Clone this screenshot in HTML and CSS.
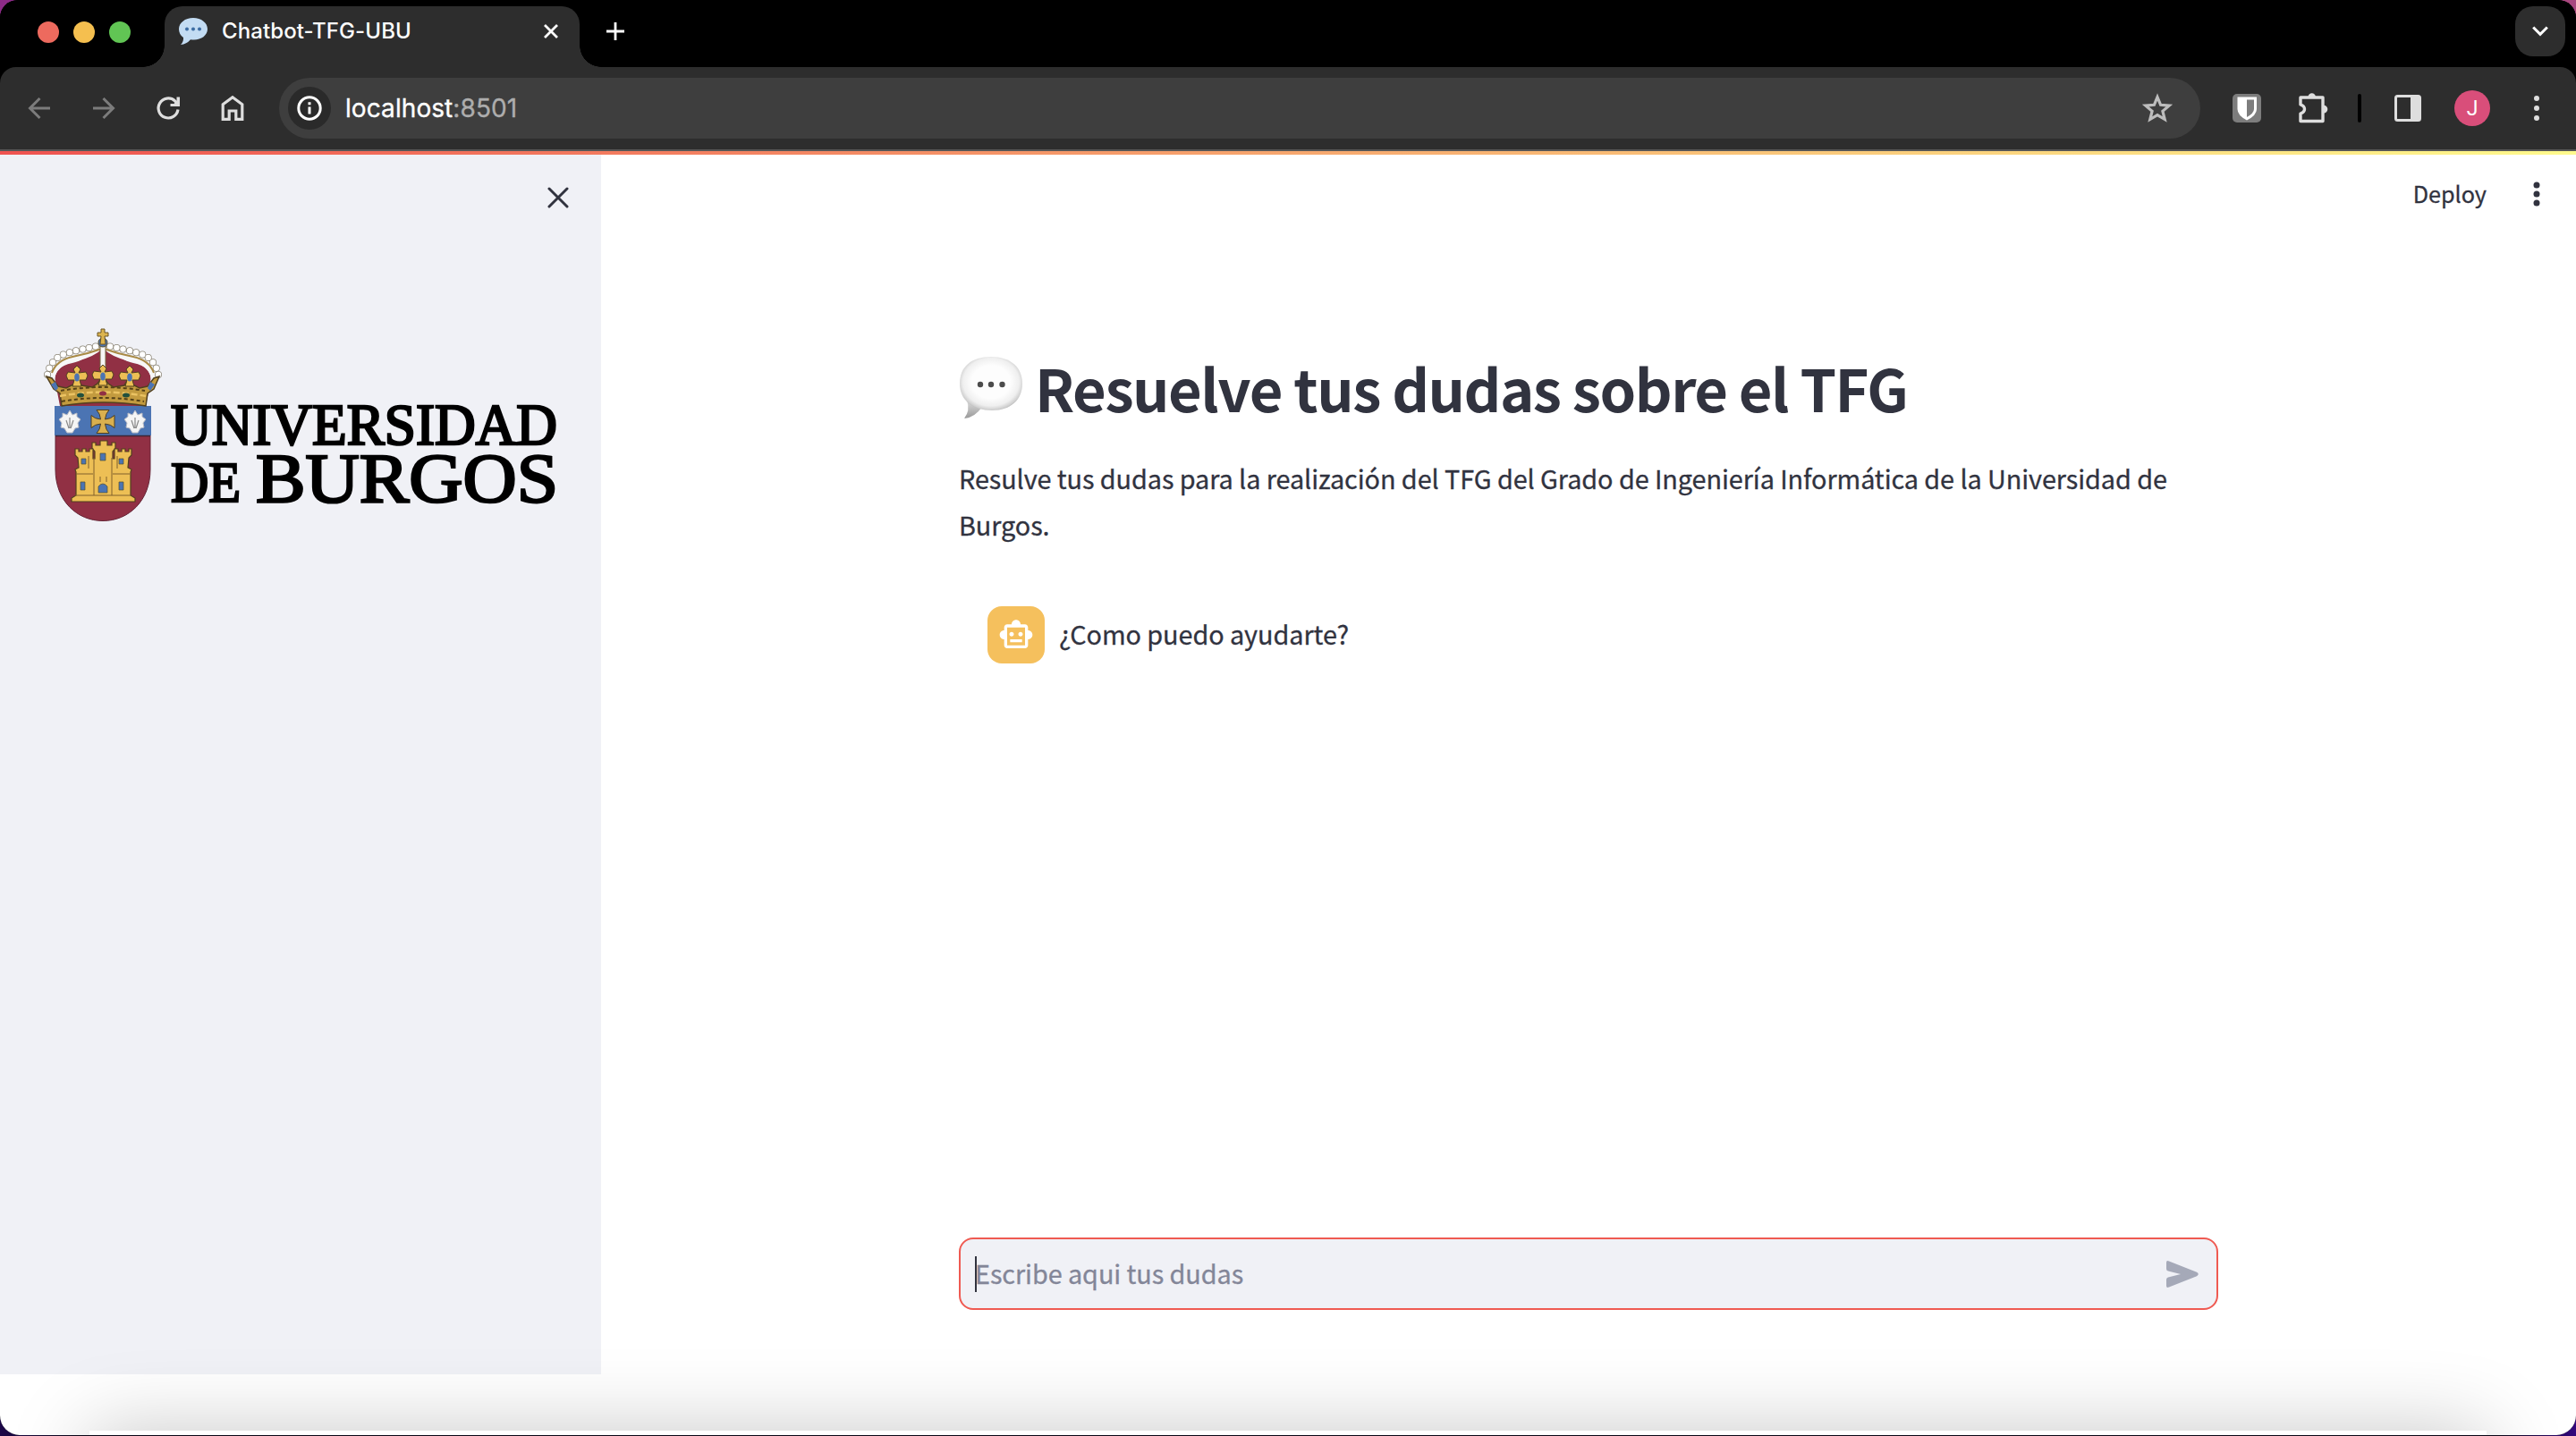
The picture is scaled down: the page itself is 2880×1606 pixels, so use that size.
FILE: index.html
```html
<!DOCTYPE html>
<html lang="es">
<head>
<meta charset="utf-8">
<title>Chatbot-TFG-UBU</title>
<link rel="stylesheet" href="styles.css">
</head>
<body>
<div class="window">
  <header class="tabstrip">
    <div class="lights"><i class="red"></i><i class="amber"></i><i class="green"></i></div>
    <div class="tab">
      <svg class="favicon" width="32" height="32" viewBox="0 0 32 32"><path fill="#c3dcf3" d="M16 1C25 1 32 6.500 32 13.500S25 25.500 17 25.500q-2 0-4-.3Q8.500 30.500 2 31q3.500-3.500 3-8Q0 19.500 0 13.500C0 6.500 7 1 16 1z"/><g fill="#3d6da3"><circle cx="9" cy="13.500" r="2"/><circle cx="16" cy="13.500" r="2"/><circle cx="23" cy="13.500" r="2"/></g></svg>
      <span class="tab-title">Chatbot-TFG-UBU</span>
      <svg width="16" height="16" viewBox="0 0 16 16" fill="none" stroke="#fff" stroke-width="2.800"><path d="M1 1l14 14M15 1L1 15"/></svg>
    </div>
    <svg class="plus" width="20" height="20" viewBox="0 0 20 20" fill="none" stroke="#fff" stroke-width="2.800"><path d="M10 0v20M0 10h20"/></svg>
    <div class="tab-search"><svg width="18" height="12" viewBox="0 0 18 12" fill="none" stroke="#fff" stroke-width="3"><path d="M1.200 1.500L9 9.300l7.800-7.800"/></svg></div>
  </header>
  <div class="toolbar">
    <div class="nav">
      <svg width="28" height="28" viewBox="0 0 28 28" fill="none" stroke="#7c7c7c" stroke-width="3"><path d="M26 14H4M14.500 3L3.500 14l11 11"/></svg>
      <svg width="28" height="28" viewBox="0 0 28 28" fill="none" stroke="#7c7c7c" stroke-width="3"><path d="M2 14h22M13.500 3l11 11-11 11"/></svg>
      <svg width="28" height="28" viewBox="0 0 28 28"><path fill="none" stroke="#dedede" stroke-width="3.200" d="M25 15.500A11 11 0 1 1 21.500 5.800l2 2"/><path fill="#dedede" d="M27 1.500V12H16.500V9h4l3-3.500v-4z"/></svg>
      <svg width="28" height="28" viewBox="0 0 28 28" fill="none" stroke="#dedede" stroke-width="3.200"><path d="M3.200 26.300V9.800L14 1.800l10.800 8v16.500h-7V17h-7.600v9.300z"/></svg>
    </div>
    <div class="omnibox">
      <div class="info"><svg width="28" height="28" viewBox="0 0 28 28" fill="none" stroke="#fff" stroke-width="3"><circle cx="14" cy="14" r="12.200"/><path d="M14 12.500v8M14 7.200v3"/></svg></div>
      <span class="url">localhost<span class="port">:8501</span></span>
      <svg class="star" width="36" height="34" viewBox="0 0 36 34" fill="none" stroke="#bdbdbd" stroke-width="3.200"><path d="M18 4.500l3.600 8.800 9.600.8-7.300 6.200 2.300 9.200L18 24.600l-8.200 4.900 2.300-9.200-7.300-6.200 9.600-.8z"/></svg>
    </div>
    <div class="actions">
      <svg width="32" height="32" viewBox="0 0 32 32"><rect width="32" height="32" rx="5" fill="#7d7d7d"/><path fill="#fff" d="M5.500 3.500h21.500V17q0 7-11 12.500Q5.500 24 5.500 17z"/><path fill="#7d7d7d" d="M16 6.500h8V17q0 4.500-8 9z"/></svg>
      <svg class="puzzle" width="36" height="36" viewBox="0 0 36 36"><path fill="none" stroke="#dedede" stroke-width="3.400" stroke-linejoin="round" d="M4 7h25v26.500H4V25q4.500-1.500 4.500-5T4 15z"/><path fill="#dedede" d="M12.500 6.500a4.200 4.200 0 0 1 8.400 0zM30 15.800a4.300 4.300 0 0 1 0 8.600z"/></svg>
      <i class="divider"></i>
      <svg class="panel" width="30" height="30" viewBox="0 0 30 30"><rect x="1.500" y="1.500" width="27" height="27" rx="2" fill="none" stroke="#dedede" stroke-width="3"/><path fill="#dedede" d="M18 1h10v28H18z"/></svg>
      <div class="profile">J</div>
      <svg width="8" height="30" viewBox="0 0 8 30" fill="#dedede"><circle cx="4" cy="4" r="3"/><circle cx="4" cy="15" r="3"/><circle cx="4" cy="26" r="3"/></svg>
    </div>
  </div>
  <div class="accent"></div>
  <div class="page">
    <aside class="sidebar">
      <svg class="close" width="24" height="24" viewBox="0 0 24 24" fill="none" stroke="#31333f" stroke-width="3" stroke-linecap="round"><path d="M2 2l20 20M22 2L2 22"/></svg>
      <svg class="logo" width="600" height="222" viewBox="48 364 600 222">
        <defs>
          <g id="fleuron"><path d="M0-13l4 4-2 4 8-1 2 4-2 5-7 0 2 7h-10l2-7-7 0-2-5 2-4 8 1-2-4z" fill="#edbf55" stroke="#51401f" stroke-width="1"/><ellipse rx="2.800" ry="4.500" fill="#4b74b3"/></g>
          <g id="shell"><path d="M0-13l3 5 5-2 0 4 4 3-3 4 1 5-4 1-3 5H-3l-3-5-4-1 1-5-3-4 4-3 0-4 5 2z" fill="#f5f5f5" stroke="#b7bac4" stroke-width="1"/><path d="M0-5v12M-4-2l3 9M4-2L1 7" stroke="#888" stroke-width="1.200" fill="none"/></g>
        </defs>
        <path fill="#913044" stroke="#652536" stroke-width="1" d="M62 455h106v70c0 35-24 57.500-53 57.500S62 560 62 525z"/>
        <path fill="#4b74b3" d="M61 454h108v33H61z"/><path d="M62 487.500h106" stroke="#3c2436" stroke-width="1.500"/>
        <use href="#shell" x="78" y="472"/><use href="#shell" x="151" y="472"/>
        <path fill="#d9b04f" stroke="#51401f" stroke-width="1" d="M108 458.500h14q-4 4-4.500 10.500 6.500-.5 10.500-4.500v14q-4-4-10.500-4.500.5 6.500 4.500 10.500h-14q4-4 4.500-10.500-6.500.5-10.500 4.500v-14q4 4 10.500 4.500-.5-6.500-4.500-10.500z"/>
        <path fill="#913044" d="M62 428q-3-18 19-22 14-3 34-20 20 17 34 20 22 4 19 22l-5 26H67z"/>
        <g fill="none" stroke="#f7f7f7" stroke-width="6"><path d="M58 421q6-17 27-20 20-5 28-14M172 421q-6-17-27-20-20-5-28-14"/></g>
        <g fill="none" stroke="#8b8576" stroke-width="8" stroke-linecap="round" stroke-dasharray="0 7.500"><path d="M53 419q4-19 22-24 17-5 40-9M177 419q-4-19-22-24-17-5-40-9"/></g>
        <g fill="none" stroke="#fff" stroke-width="6.500" stroke-linecap="round" stroke-dasharray="0 7.500"><path d="M53 419q4-19 22-24 17-5 40-9M177 419q-4-19-22-24-17-5-40-9"/></g>
        <path fill="none" stroke="#a98a45" stroke-width="2" d="M58 417q5-14 23-18 16-3 33-9M172 417q-5-14-23-18-16-3-33-9"/>
        <path fill="#f6f6f6" stroke="#746541" d="M112 387h6v24h-6z"/>
        <path fill="#c39b3f" stroke="#51401f" stroke-width="1.500" d="M52 421l6 2 7 9 9 2 8-4 4-7 5 8 12 2 6-4 6-8 6 8 6 4 12-2 5-8 4 7 8 4 9-2 7-9 6-2-6 14-7 5-2 14q-47-8-94 0l-2-14-7-5z"/>
        <path fill="none" stroke="#554117" stroke-width="2" stroke-dasharray="4 3" d="M68 437q47-8 94 0M69 449q46-8 92 0"/>
        <path fill="none" stroke="#ebc363" stroke-width="2.500" stroke-dasharray="7 3" d="M67 443q48-9 96 0"/>
        <use href="#fleuron" x="86" y="422"/><use href="#fleuron" x="115" y="421"/><use href="#fleuron" x="145" y="422"/>
        <path fill="#4b74b3" d="M57 430l5-3 3 7-3 3zM173 430l-5-3-3 7 3 3z"/>
        <g><ellipse cx="90" cy="442" rx="4" ry="2.500" fill="#21503d"/><ellipse cx="115" cy="440" rx="4" ry="2.500" fill="#913044"/><ellipse cx="141" cy="442" rx="4" ry="2.500" fill="#21503d"/></g>
        <circle cx="115" cy="383" r="5" fill="#4b74b3" stroke="#58502f"/><path fill="#dcb44f" stroke="#6a5425" stroke-width="1" d="M113 368h4v4h4v4h-4l1 9h-6l1-9h-4v-4h4z"/>
        <path fill="#edbf55" stroke="#51401f" stroke-width="1.200" d="M80 561v-4l5-3V528l-1-3 4-2-1-11-3-3v-7h4v3h4v-3h4v3h4v-3h4v11h2v-8l-3-4v-6h4v3h5v-5h8v5h5v-3h4v6l-3 4v8h2v-11h4v3h4v-3h4v3h4v-3h3v7l-3 3-1 11 4 2-1 3v26l5 3v4z"/>
        <path fill="none" stroke="#80612c" d="M105 512v42M125 512v42M85 530h19M126 530h19M99 510v14M131 510v14M112 533v6M119 533v6M84 554h62"/>
        <g fill="#4b74b3" stroke="#55502f" stroke-width=".7"><path d="M112 507h6v8h-6zM91 513h5v6h-5zM133 513h5v6h-5zM90 539h5v9h-5zM133 539h5v9h-5zM110 551v-7q5-6 10 0v7z"/></g>
        <g class="wordmark"><text x="191" y="496.500" font-size="65" textLength="432" lengthAdjust="spacingAndGlyphs">UNIVERSIDAD</text><text x="191" y="560.500" font-size="63" textLength="78" lengthAdjust="spacingAndGlyphs">DE</text><text x="286" y="560.500" font-size="78" textLength="338" lengthAdjust="spacingAndGlyphs">BURGOS</text></g>
      </svg>
    </aside>
    <main class="main">
      <div class="appbar"><span>Deploy</span><svg width="8" height="30" viewBox="0 0 8 30" fill="#31333f"><circle cx="4" cy="5" r="3.500"/><circle cx="4" cy="15" r="3.500"/><circle cx="4" cy="25" r="3.500"/></svg></div>
      <div class="content">
        <h1><svg width="72" height="72" viewBox="0 0 72 72">
          <defs><radialGradient id="bubble" cx=".5" cy=".47" r=".56"><stop offset=".55" stop-color="#fdfdfd"/><stop offset=".8" stop-color="#efefef"/><stop offset=".93" stop-color="#cfcfcf"/><stop offset="1" stop-color="#a8a8a8"/></radialGradient><linearGradient id="tail" x1="0" y1="0" x2="0" y2="1"><stop offset="0" stop-color="#ddd"/><stop offset="1" stop-color="#999"/></linearGradient></defs>
          <path fill="url(#tail)" d="M9 50q4 11-3 20 12-1 20-13z"/><path fill="url(#bubble)" d="M36 1C58 1 71 13 71 31S58 61 37 61 1 50 1 31 14 1 36 1z"/><g fill="#4c4c4c"><circle cx="24" cy="32" r="3.200"/><circle cx="36" cy="32" r="3.200"/><circle cx="48.500" cy="32" r="3.200"/></g></svg><span class="headline">Resuelve tus dudas sobre el TFG</span></h1>
        <p class="intro">Resulve tus dudas para la realización del TFG del Grado de Ingeniería Informática de la Universidad de<br>Burgos.</p>
        <div class="message">
          <div class="bot"><svg width="40" height="40" viewBox="0 0 24 24" fill="#fff"><path d="M20 9V7c0-1.100-.9-2-2-2h-3c0-1.660-1.340-3-3-3S9 3.340 9 5H6c-1.100 0-2 .9-2 2v2c-1.660 0-3 1.340-3 3s1.340 3 3 3v4c0 1.100.9 2 2 2h12c1.100 0 2-.9 2-2v-4c1.660 0 3-1.340 3-3s-1.340-3-3-3zm-2 10H6V7h12v12zm-9-6c-.83 0-1.500-.67-1.500-1.500S8.170 10 9 10s1.500.67 1.500 1.500S9.830 13 9 13zm7.500-1.500c0 .83-.67 1.500-1.500 1.500s-1.500-.67-1.500-1.500.67-1.500 1.500-1.500 1.500.67 1.500 1.500zM8 15h8v2H8v-2z"/></svg></div>
          <span>¿Como puedo ayudarte?</span>
        </div>
        <div class="chat-input"><i class="caret"></i><span>Escribe aqui tus dudas</span><svg width="36" height="30" viewBox="0 0 36 30" fill="#a5a9b8"><path d="M0 2Q0-.8 3 .5l31 12.300q3.500 2.200 0 4.400L3 29.500Q0 30.800 0 28v-7q0-2 2-2.500L16 15 2 11.500Q0 11 0 9z"/></svg></div>
      </div>
    </main>
  </div>
  <div class="dock-shadow"></div>
</div>
</body>
</html>
```
FILE: styles.css
```css
* { box-sizing: border-box; }
body { margin: 0; width: 2880px; height: 1606px; overflow: hidden; background: linear-gradient(90deg, #8c2b87, #a9487f) top / 100% 800px no-repeat, linear-gradient(90deg, #1c0748, #090615 3%, #090615 97%, #32077d); }
svg { display: block; flex: none; }
.window { position: relative; display: flex; flex-direction: column; width: 2880px; height: 1605px; border-radius: 20px 20px 22px 22px; overflow: hidden; background: #000; }
.tabstrip { height: 75px; display: flex; align-items: flex-start; background: #000; color: #fff; }
.lights { display: flex; gap: 16px; padding: 24px 0 0 42px; width: 184px; }
.lights i { width: 24px; height: 24px; border-radius: 50%; }
.red { background: #ed6a5e; }
.amber { background: #f5bf4f; }
.green { background: #61c554; }
.tab { position: relative; display: flex; align-items: center; width: 464px; height: 68px; margin-top: 7px; padding: 0 24px 12px 16px; background: #2d2d2d; border-radius: 20px 20px 0 0; }
.tab::before, .tab::after { content: ""; position: absolute; bottom: 0; width: 24px; height: 24px; }
.tab::before { left: -24px; background: radial-gradient(circle at 0 0, transparent 23.500px, #2d2d2d 24px); }
.tab::after { right: -24px; background: radial-gradient(circle at 100% 0, transparent 23.500px, #2d2d2d 24px); }
.tab-title { flex: 1; padding-left: 16px; font: 500 24px/30px Inter, sans-serif; letter-spacing: .1px; }
.plus { margin: 25px 0 0 30px; }
.tab-search { display: flex; align-items: center; justify-content: center; width: 56px; height: 56px; margin: 7px 12px 0 auto; border-radius: 20px; background: #2d2d2d; }
.toolbar { height: 94px; display: flex; align-items: center; background: #2d2d2d; border-bottom: 2px solid #565656; border-radius: 18px 18px 0 0; }
.nav { display: flex; gap: 44px; width: 312px; padding-left: 30px; }
.omnibox { display: flex; align-items: center; width: 2148px; height: 68px; padding: 0 30px 0 10px; border-radius: 34px; background: #3e3e3e; }
.info { display: flex; align-items: center; justify-content: center; width: 48px; height: 48px; border-radius: 50%; background: #2a2a2a; }
.url { flex: 1; padding-left: 16px; font: 400 28px/40px Inter, sans-serif; letter-spacing: .08px; color: #fff; -webkit-text-stroke: .35px; }
.port { color: #adadad; }
.actions { flex: 1; display: flex; align-items: center; padding-left: 36px; }
.puzzle { margin: -2px 0 0 40px; }
.divider { width: 4px; height: 32px; margin-left: 32px; border-radius: 2px; background: #000; }
.panel { margin-left: 37px; }
.profile { width: 40px; height: 40px; margin: 0 48px 0 37px; border-radius: 50%; background: #d94e7a; color: #fff; font: 400 23px/42px Roboto, sans-serif; text-align: center; }
.accent { height: 4px; background: linear-gradient(90deg, #ef5350, #fffa8c); }
.page { flex: 1; display: flex; background: #fff; color: #31333f; font-family: "Noto Sans CJK SC", sans-serif; }
.sidebar { width: 672px; height: 1364px; background: #f0f1f6; }
.close { margin: 36px 0 0 612px; }
.logo { margin: 131px 0 0 48px; }
.wordmark { font-family: "Liberation Serif", serif; font-weight: 400; fill: #000; stroke: #000; stroke-width: 2.600px; }
.main { flex: 1; display: flex; flex-direction: column; }
.appbar { height: 88px; display: flex; align-items: center; justify-content: flex-end; gap: 52px; padding: 0 40px 0 0; font-size: 25.200px; line-height: 40px; -webkit-text-stroke: .3px; }
.appbar span { margin-top: -2px; }
.content { width: 1408px; margin: 137px 0 0 400px; }
h1 { display: flex; margin: 0; font-weight: 700; font-size: 65px; line-height: 86px; letter-spacing: -1.470px; }
.headline { padding-left: 13px; margin-top: -8px; }
.intro { margin: 33px 0 0; font-size: 28.800px; line-height: 52px; white-space: nowrap; letter-spacing: -.065px; -webkit-text-stroke: .3px; }
.message { display: flex; align-items: center; gap: 16px; margin: 65px 0 0 32px; font-size: 28.800px; line-height: 48px; letter-spacing: -.060px; -webkit-text-stroke: .3px; }
.message span { margin-top: -3px; }
.bot { display: flex; align-items: center; justify-content: center; width: 64px; height: 64px; border-radius: 16px; background: #f5c05d; }
.chat-input { display: flex; align-items: center; height: 81px; margin-top: 642px; padding: 0 20px 0 16px; border: 2px solid #ef5a52; border-radius: 16px; background: #f0f1f6; color: #838698; font-size: 28.800px; letter-spacing: -.060px; -webkit-text-stroke: .3px; }
.chat-input span { flex: 1; line-height: 48px; margin: -2px 0 0 -2px; }
.caret { width: 2px; height: 40px; background: #31333f; }
.dock-shadow { position: absolute; left: 100px; right: 100px; top: 1600px; height: 200px; box-shadow: 0 0 90px rgba(0, 0, 0, .22); }
```
